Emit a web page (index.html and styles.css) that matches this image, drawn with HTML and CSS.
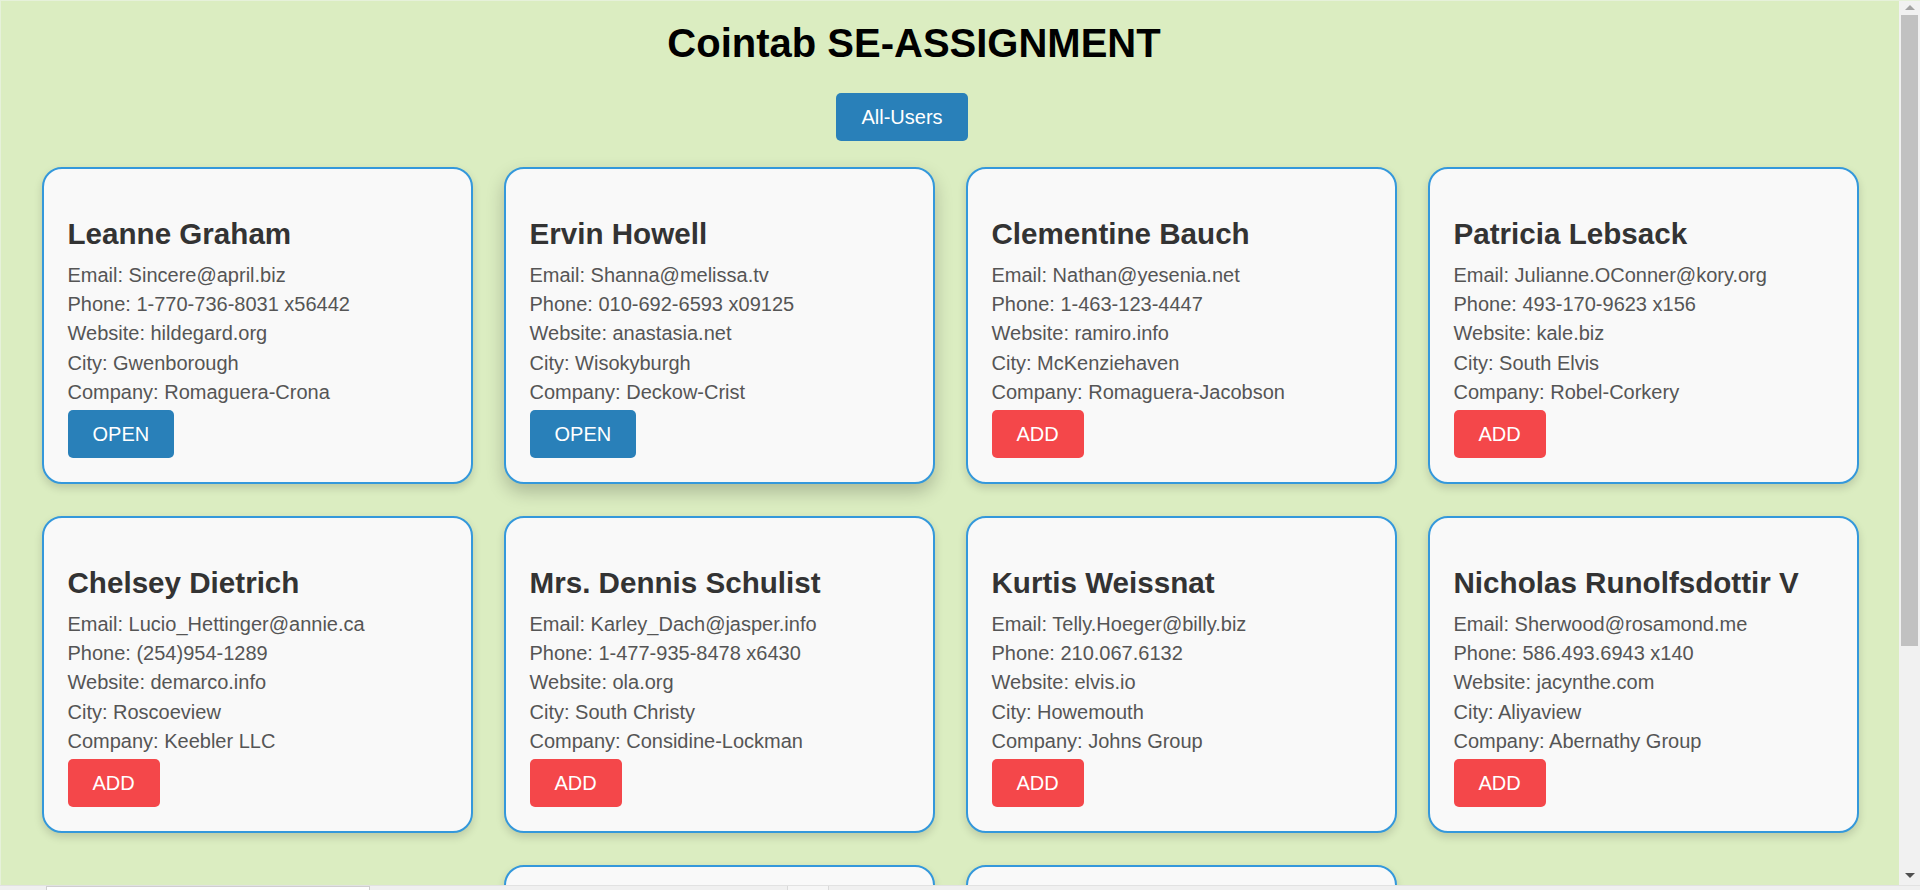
FILE: index.html
```html
<!DOCTYPE html>
<html lang="en">
<head>
<meta charset="utf-8">
<title>Cointab SE-ASSIGNMENT</title>
<link rel="stylesheet" href="styles.css">
</head>
<body>
<div class="app">
  <div class="window">
    <main class="main">
      <h1 class="title">Cointab SE-ASSIGNMENT</h1>
      <div class="nav">
        <button class="btn btn-blue">All-Users</button>
      </div>
      <div class="cards">
        <div class="card">
          <h2 class="name">Leanne Graham</h2>
          <p class="info">Email: Sincere@april.biz</p>
          <p class="info">Phone: 1-770-736-8031 x56442</p>
          <p class="info">Website: hildegard.org</p>
          <p class="info">City: Gwenborough</p>
          <p class="info">Company: Romaguera-Crona</p>
          <button class="btn btn-blue card-btn">OPEN</button>
        </div>
        <div class="card card-hover">
          <h2 class="name">Ervin Howell</h2>
          <p class="info">Email: Shanna@melissa.tv</p>
          <p class="info">Phone: 010-692-6593 x09125</p>
          <p class="info">Website: anastasia.net</p>
          <p class="info">City: Wisokyburgh</p>
          <p class="info">Company: Deckow-Crist</p>
          <button class="btn btn-blue card-btn">OPEN</button>
        </div>
        <div class="card">
          <h2 class="name">Clementine Bauch</h2>
          <p class="info">Email: Nathan@yesenia.net</p>
          <p class="info">Phone: 1-463-123-4447</p>
          <p class="info">Website: ramiro.info</p>
          <p class="info">City: McKenziehaven</p>
          <p class="info">Company: Romaguera-Jacobson</p>
          <button class="btn btn-red card-btn">ADD</button>
        </div>
        <div class="card">
          <h2 class="name">Patricia Lebsack</h2>
          <p class="info">Email: Julianne.OConner@kory.org</p>
          <p class="info">Phone: 493-170-9623 x156</p>
          <p class="info">Website: kale.biz</p>
          <p class="info">City: South Elvis</p>
          <p class="info">Company: Robel-Corkery</p>
          <button class="btn btn-red card-btn">ADD</button>
        </div>
        <div class="card">
          <h2 class="name">Chelsey Dietrich</h2>
          <p class="info">Email: Lucio_Hettinger@annie.ca</p>
          <p class="info">Phone: (254)954-1289</p>
          <p class="info">Website: demarco.info</p>
          <p class="info">City: Roscoeview</p>
          <p class="info">Company: Keebler LLC</p>
          <button class="btn btn-red card-btn">ADD</button>
        </div>
        <div class="card">
          <h2 class="name">Mrs. Dennis Schulist</h2>
          <p class="info">Email: Karley_Dach@jasper.info</p>
          <p class="info">Phone: 1-477-935-8478 x6430</p>
          <p class="info">Website: ola.org</p>
          <p class="info">City: South Christy</p>
          <p class="info">Company: Considine-Lockman</p>
          <button class="btn btn-red card-btn">ADD</button>
        </div>
        <div class="card">
          <h2 class="name">Kurtis Weissnat</h2>
          <p class="info">Email: Telly.Hoeger@billy.biz</p>
          <p class="info">Phone: 210.067.6132</p>
          <p class="info">Website: elvis.io</p>
          <p class="info">City: Howemouth</p>
          <p class="info">Company: Johns Group</p>
          <button class="btn btn-red card-btn">ADD</button>
        </div>
        <div class="card">
          <h2 class="name">Nicholas Runolfsdottir V</h2>
          <p class="info">Email: Sherwood@rosamond.me</p>
          <p class="info">Phone: 586.493.6943 x140</p>
          <p class="info">Website: jacynthe.com</p>
          <p class="info">City: Aliyaview</p>
          <p class="info">Company: Abernathy Group</p>
          <button class="btn btn-red card-btn">ADD</button>
        </div>
        <div class="card">
          <h2 class="name">Glenna Reichert</h2>
          <p class="info">Email: Chaim_McDermott@dana.io</p>
          <p class="info">Phone: (775)976-6794 x41206</p>
          <p class="info">Website: conrad.com</p>
          <p class="info">City: Bartholomebury</p>
          <p class="info">Company: Yost and Sons</p>
          <button class="btn btn-red card-btn">ADD</button>
        </div>
        <div class="card">
          <h2 class="name">Clementina DuBuque</h2>
          <p class="info">Email: Rey.Padberg@karina.biz</p>
          <p class="info">Phone: 024-648-3804</p>
          <p class="info">Website: ambrose.net</p>
          <p class="info">City: Lebsackbury</p>
          <p class="info">Company: Hoeger LLC</p>
          <button class="btn btn-red card-btn">ADD</button>
        </div>
      </div>
    </main>
    <div class="scrollbar">
      <div class="arrow arrow-up"></div>
      <div class="thumb"></div>
      <div class="track-rest"></div>
      <div class="arrow arrow-down"></div>
    </div>
  </div>
  <div class="statusbar">
    <div class="status-box"></div>
    <div class="status-gap"></div>
    <div class="status-box2"></div>
  </div>
</div>
</body>
</html>
```

FILE: styles.css
```css
html, body {
  margin: 0;
  padding: 0;
  height: 100%;
  overflow: hidden;
}

body {
  font-family: "Liberation Sans", Arial, sans-serif;
  background: #f0f0f0;
}

.app {
  display: flex;
  flex-direction: column;
  height: 890px;
}

.window {
  display: flex;
  height: 885px;
  border-top: 1px solid #e6f1da;
  border-left: 1px solid #e6f1da;
  box-sizing: border-box;
}

.main {
  flex: 1;
  overflow: hidden;
  background: #dbedc1;
}

.title {
  margin: 19px 0 0;
  padding-right: 72px;
  font-size: 40px;
  line-height: 46px;
  font-weight: bold;
  color: #000;
  text-align: center;
}

.nav {
  display: flex;
  justify-content: center;
  padding-right: 96px;
  margin-top: 27px;
}

.btn {
  border: none;
  border-radius: 5px;
  font-family: "Liberation Sans", Arial, sans-serif;
  font-size: 20px;
  line-height: 24px;
  padding: 12px 25px;
  color: #fff;
  cursor: pointer;
}

.btn-blue {
  background: #2980b9;
}

.btn-red {
  background: #f4474a;
}

.cards {
  display: flex;
  flex-wrap: wrap;
  justify-content: center;
  gap: 32px 31px;
  margin-top: 26px;
}

.card {
  width: 431px;
  height: 317px;
  box-sizing: border-box;
  border: 2px solid #3498db;
  border-radius: 20px;
  background: #f9f9f9;
  padding: 24px;
  box-shadow: 0 4px 8px rgba(0, 0, 0, 0.15);
  display: flex;
  flex-direction: column;
  align-items: flex-start;
}

.card-hover {
  box-shadow: 0 8px 18px rgba(0, 0, 0, 0.22);
}

.name {
  margin: 24px 0 10px;
  font-size: 29.6px;
  line-height: 34px;
  font-weight: bold;
  color: #333;
}

.info {
  margin: 0;
  font-size: 20px;
  line-height: 29.2px;
  color: #555;
}

.card-btn {
  margin-top: 3px;
}

.scrollbar {
  width: 21px;
  background: #f1f1f1;
  display: flex;
  flex-direction: column;
  align-items: center;
}

.arrow {
  width: 0;
  height: 0;
  border-left: 5px solid transparent;
  border-right: 5px solid transparent;
}

.arrow-up {
  margin-top: 4px;
  border-bottom: 5px solid #a3a3a3;
}

.thumb {
  width: 17px;
  margin-top: 5px;
  height: 631px;
  background: #c1c1c1;
}

.track-rest {
  flex: 1;
}

.arrow-down {
  margin-bottom: 7px;
  border-top: 5px solid #505050;
}

.statusbar {
  height: 5px;
  display: flex;
  background: #f0f0f0;
  border-top: 1px solid #e2e2e2;
  box-sizing: border-box;
}

.status-box {
  margin-left: 46px;
  width: 322px;
  background: #fff;
  border: 1px solid #cfcfcf;
  border-bottom: none;
}

.status-gap {
  width: 417px;
}

.status-box2 {
  width: 40px;
  background: #f6f6f6;
  border-left: 1px solid #dadada;
  border-right: 1px solid #dadada;
}
```
